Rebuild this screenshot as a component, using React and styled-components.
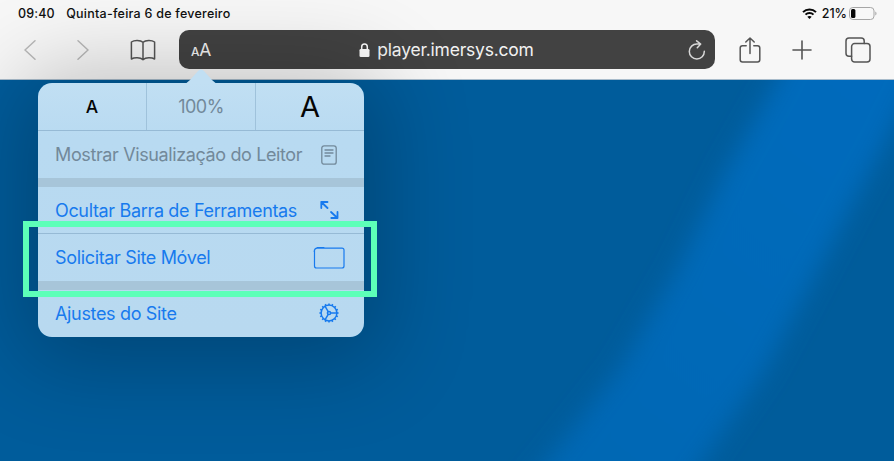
import React from "react";
import styled, { createGlobalStyle } from "styled-components";

const Global = createGlobalStyle`
  * { box-sizing: border-box; }
  body { margin: 0; overflow: hidden; font-family: Inter, "Liberation Sans", sans-serif; }
`;

const Screen = styled.div`
  position: relative;
  display: flex;
  flex-direction: column;
  width: 894px;
  height: 461px;
  overflow: hidden;
  background: #005c9b;
`;

const Header = styled.header`
  display: flex;
  flex-direction: column;
  height: 80px;
  background: #f7f7f7;
  border-bottom: 1px solid #a9bccb;
`;

const StatusBar = styled.div`
  display: flex;
  align-items: center;
  height: 26px;
  padding: 0 17px 0 18px;
  color: #101010;
  font-size: 12.5px;
  font-weight: 500;
`;

const StatusText = styled.span`
  white-space: nowrap;
  letter-spacing: ${(p) => p.$spacing || "0"};
  margin-left: ${(p) => p.$before || "0"};
  margin-right: ${(p) => p.$gap || "0"};
`;

const StatusRight = styled.div`
  display: flex;
  align-items: center;
  margin-left: auto;
`;

const NavBar = styled.nav`
  display: flex;
  align-items: center;
  height: 47px;
  padding-left: 20px;
`;

const NavButton = styled.button`
  display: flex;
  flex: none;
  align-items: center;
  justify-content: center;
  width: ${(p) => p.$width}px;
  height: 40px;
  margin-right: ${(p) => p.$gap || 0}px;
  padding: 0;
  border: 0;
  background: none;
  color: ${(p) => (p.$disabled ? "#b8b8b8" : "#555")};
`;

const AddressBar = styled.div`
  display: grid;
  grid-template-columns: 56px 1fr 60px;
  align-items: center;
  flex: none;
  width: 536px;
  height: 39px;
  margin-right: 19px;
  padding: 0 9px 0 12px;
  border-radius: 10px;
  background: #424242;
  color: #f2f2f2;
`;

const TextSize = styled.span`
  padding-top: 2px;
  font-size: 17.5px;
  line-height: 20px;
  letter-spacing: -0.3px;
  small { font-size: 12px; font-weight: 500; }
`;

const Host = styled.span`
  display: flex;
  align-items: center;
  justify-content: center;
  gap: 7px;
  font-size: 17.5px;
  letter-spacing: -0.22px;
  white-space: nowrap;
`;

const Reload = styled.span`
  display: flex;
  justify-content: flex-end;
`;

const Page = styled.main`
  flex: 1;
  svg { display: block; }
`;

const Popover = styled.div`
  position: absolute;
  left: 38px;
  top: 83px;
  width: 326px;
  height: 253.5px;
  border-radius: 14px;
  background: linear-gradient(#c1dff3, #b8daf1 55px, #b8d9f0);
  box-shadow: 0 8px 90px 18px rgba(0, 0, 0, 0.24);
`;

const Arrow = styled.svg`
  position: absolute;
  left: 145px;
  top: -14px;
`;

const ZoomRow = styled.div`
  display: grid;
  grid-template-columns: 109px 109px 108px;
  height: 48px;
  border-bottom: 1px solid #96bad5;
`;

const ZoomCell = styled.div`
  display: flex;
  align-items: center;
  justify-content: center;
  border-right: ${(p) => (p.$last ? "0" : "1px solid #9fc2db")};
  color: ${(p) => (p.$muted ? "#72899a" : "#050505")};
  font-size: ${(p) => p.$size}px;
  font-weight: ${(p) => p.$weight || 400};
  letter-spacing: ${(p) => p.$spacing || "0"};
`;

const MenuItem = styled.div`
  display: flex;
  align-items: center;
  justify-content: space-between;
  height: ${(p) => p.$height}px;
  padding: 0 13px 0 17px;
  border-bottom: ${(p) => (p.$divided ? "1px solid #96bad5" : "0")};
  color: ${(p) => (p.$muted ? "#72899a" : "#177aee")};
`;

const MenuLabel = styled.span`
  font-size: 18px;
  white-space: nowrap;
  letter-spacing: ${(p) => p.$spacing || "-0.34px"};
`;

const IconSlot = styled.span`
  display: flex;
  flex: none;
  justify-content: center;
  width: 44px;
`;

const Separator = styled.div`
  height: 9px;
  background: #a7c5d9;
`;

const Highlight = styled.div`
  position: absolute;
  left: 23px;
  top: 221px;
  width: 354px;
  height: 76px;
  border: 6px solid #5dffb8;
`;

const Svg = ({ w, h, sw = 1.4, children }) => (
  <svg width={w} height={h} viewBox={`0 0 ${w} ${h}`} fill="none" stroke="currentColor" strokeWidth={sw} strokeLinecap="round" strokeLinejoin="round">
    {children}
  </svg>
);

const Wallpaper = () => (
  <svg width="894" height="381" viewBox="0 80 894 381">
    <defs>
      <filter id="soft" x="-20%" y="-20%" width="140%" height="140%">
        <feGaussianBlur stdDeviation="12" />
      </filter>
      <linearGradient id="band" x1="0" y1="1" x2="0.7" y2="0">
        <stop offset="0" stopColor="#0067b3" />
        <stop offset="1" stopColor="#006bbc" />
      </linearGradient>
    </defs>
    <rect y="80" width="894" height="381" fill="#005c9b" />
    <path d="M800 30 L777 80 L726 170 L677 270 L619 370 L547 461 L515 500 H675 L703 461 L765 370 L818 270 L852 205 L887 140 L935 40Z" fill="url(#band)" filter="url(#soft)" />
  </svg>
);

const gearTeeth = Array.from({ length: 16 }, (_, i) => {
  const a = (i * Math.PI) / 8;
  return `M${11 + 7.8 * Math.cos(a)} ${11 + 7.8 * Math.sin(a)}L${11 + 9.6 * Math.cos(a)} ${11 + 9.6 * Math.sin(a)}`;
}).join("");

export default function App() {
  return (
    <Screen>
      <Global />
      <Header>
        <StatusBar>
          <StatusText $gap="11.5px" $spacing="0.15px">09:40</StatusText>
          <StatusText $spacing="0.24px">Quinta-feira 6 de fevereiro</StatusText>
          <StatusRight>
            <svg width="15" height="11" viewBox="0 0 15 11" fill="none" stroke="#080808" strokeWidth="2">
              <path d="M1 4.1C4.6.5 10.4.5 14 4.1M3.5 6.6c2.2-2.2 5.8-2.2 8 0" />
              <path d="M7.5 11L5.3 8.7c1.2-1.1 3.2-1.1 4.4 0Z" fill="#080808" stroke="none" />
            </svg>
            <StatusText $before="5px" $gap="2px">21%</StatusText>
            <svg width="28" height="13" viewBox="0 0 28 13" fill="none">
              <rect x=".5" y=".5" width="24.5" height="12" rx="3.4" stroke="#a5a5a5" />
              <rect x="2" y="2" width="4.4" height="9" rx="1.5" fill="#050505" />
              <path d="M26.3 4.5c1.6.7 1.6 3.3 0 4Z" fill="#a5a5a5" />
            </svg>
          </StatusRight>
        </StatusBar>
        <NavBar>
          <NavButton $width={20} $gap={33} $disabled aria-label="Voltar">
            <Svg w={12} h={20} sw={1.5}><path d="M11 .8L1 10l10 9.2" /></Svg>
          </NavButton>
          <NavButton $width={20} $gap={37} $disabled aria-label="Avançar">
            <Svg w={12} h={20} sw={1.5}><path d="M1 .8L11 10 1 19.2" /></Svg>
          </NavButton>
          <NavButton $width={26} $gap={23} aria-label="Favoritos">
            <Svg w={26} h={22} sw={1.5}>
              <path d="M13 3.3C10.4.9 4.2.9 1.4 3v17c3-1.7 8.8-1.7 11.6.6 2.8-2.3 8.6-2.3 11.6-.6V3C21.8.9 15.6.9 13 3.3V20.6" />
            </Svg>
          </NavButton>
          <AddressBar>
            <TextSize><small>A</small>A</TextSize>
            <Host>
              <svg width="11" height="14" viewBox="0 0 11 14" fill="none">
                <rect x=".5" y="6" width="10" height="8" rx="1.3" fill="#fafafa" />
                <path d="M2.7 6.5V4C2.7.1 8.3.1 8.3 4v2.5" stroke="#fafafa" strokeWidth="1.5" />
              </svg>
              player.imersys.com
            </Host>
            <Reload>
              <Svg w={18} h={20} sw={1.5}>
                <path d="M16.3 11.3A7.5 7.5 0 1 1 9 4h3.6M8.6.8L12.7 4 9.3 7.7" stroke="#d8d8d8" />
              </Svg>
            </Reload>
          </AddressBar>
          <NavButton $width={32} $gap={21} aria-label="Compartilhar">
            <Svg w={22} h={26} sw={1.5}>
              <path d="M7.2 8.7H3.5Q1.2 8.7 1.2 11V22.8Q1.2 25 3.5 25H18.5Q20.8 25 20.8 22.8V11Q20.8 8.7 18.5 8.7H14.8M11 16.5V1M6.8 5L11 1l4.2 4" />
            </Svg>
          </NavButton>
          <NavButton $width={30} $gap={27} aria-label="Nova aba">
            <Svg w={20} h={20} sw={1.6}><path d="M10 1v18M1 10h18" /></Svg>
          </NavButton>
          <NavButton $width={28} aria-label="Abas">
            <Svg w={26} h={26} sw={1.5}>
              <rect x="6.6" y="6.6" width="18.4" height="18.4" rx="3" />
              <path d="M6.6 19.2H4Q1 19.2 1 16.2V4Q1 1 4 1H16.2Q19.2 1 19.2 4V6.6" />
            </Svg>
          </NavButton>
        </NavBar>
      </Header>
      <Page><Wallpaper /></Page>
      <Popover>
        <Arrow width="36" height="15" viewBox="0 0 36 15">
          <path d="M0 15Q4 14.5 7 11L15 2Q18-1 21 2L29 11Q32 14.5 36 15Z" fill="#c1dff3" />
        </Arrow>
        <ZoomRow>
          <ZoomCell $size={17.5} $weight={500}>A</ZoomCell>
          <ZoomCell $size={18} $muted $spacing="-0.5px">100%</ZoomCell>
          <ZoomCell $size={29} $last>A</ZoomCell>
        </ZoomRow>
        <MenuItem $height={47} $muted>
          <MenuLabel $spacing="-0.38px">Mostrar Visualização do Leitor</MenuLabel>
          <IconSlot>
            <Svg w={16} h={20} sw={1.3}>
              <rect x=".8" y=".8" width="14.4" height="18.4" rx="2.3" />
              <path d="M4 5h8M4 8h8M4 11h5" />
            </Svg>
          </IconSlot>
        </MenuItem>
        <Separator />
        <MenuItem $height={47} $divided>
          <MenuLabel>Ocultar Barra de Ferramentas</MenuLabel>
          <IconSlot>
            <Svg w={19} h={18} sw={1.8}>
              <path d="M1.3 7V1h6.2M1.3 1l6.2 6M11 11l6.5 6M11.3 17h6.2v-6" />
            </Svg>
          </IconSlot>
        </MenuItem>
        <MenuItem $height={47}>
          <MenuLabel>Solicitar Site Móvel</MenuLabel>
          <IconSlot>
            <Svg w={32} h={22} sw={1.2}>
              <path d="M1.5 4V19Q1.5 21 3.5 21H29Q31 21 31 19V3Q31 1.2 29 1.2H4Q1.5 1.2 1.2 4.5M4 .7h7" />
            </Svg>
          </IconSlot>
        </MenuItem>
        <Separator />
        <MenuItem $height={46}>
          <MenuLabel>Ajustes do Site</MenuLabel>
          <IconSlot>
            <Svg w={22} h={22} sw={1.5}>
              <circle cx="11" cy="11" r="7.9" />
              <path d={gearTeeth} strokeLinecap="butt" />
              <circle cx="11" cy="11" r="1.6" />
              <path d="M12.6 11h6M10.2 9.6L7 4.2M10.2 12.4L7 17.8" />
            </Svg>
          </IconSlot>
        </MenuItem>
      </Popover>
      <Highlight />
    </Screen>
  );
}
